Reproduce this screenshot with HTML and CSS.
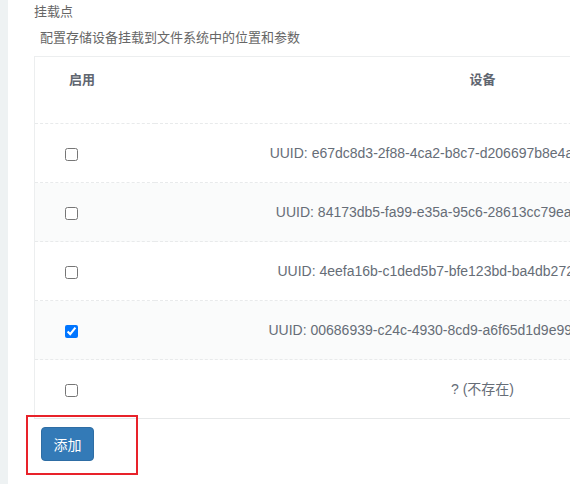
FILE: index.html
```html
<!DOCTYPE html>
<html lang="zh-CN">
<head>
<meta charset="utf-8">
<title>挂载点</title>
<link rel="stylesheet" href="styles.css">
</head>
<body>
<div class="sidebar"></div>
<main class="main">
  <h3 class="title">挂载点</h3>
  <p class="desc">配置存储设备挂载到文件系统中的位置和参数</p>
  <div class="table-wrap">
    <table class="mounts">
      <colgroup>
        <col class="c-enable">
        <col class="c-device">
        <col class="c-rest">
      </colgroup>
      <thead>
        <tr>
          <th class="col-enable">启用</th>
          <th class="col-device">设备</th>
          <th class="col-rest"></th>
        </tr>
      </thead>
      <tbody>
        <tr>
          <td class="col-enable"><input type="checkbox"></td>
          <td class="col-device">UUID: e67dc8d3-2f88-4ca2-b8c7-d206697b8e4a (/dev/sda1, 64 MB)</td>
          <td class="col-rest"></td>
        </tr>
        <tr class="alt">
          <td class="col-enable"><input type="checkbox"></td>
          <td class="col-device">UUID: 84173db5-fa99-e35a-95c6-28613cc79ea9 (/dev/sda2, 1GB)</td>
          <td class="col-rest"></td>
        </tr>
        <tr>
          <td class="col-enable"><input type="checkbox"></td>
          <td class="col-device">UUID: 4eefa16b-c1ded5b7-bfe123bd-ba4db272 (/dev/sdb1, 8 GB)</td>
          <td class="col-rest"></td>
        </tr>
        <tr class="alt">
          <td class="col-enable"><input type="checkbox" checked></td>
          <td class="col-device">UUID: 00686939-c24c-4930-8cd9-a6f65d1d9e99 (/dev/sdb2, 32 GiB)</td>
          <td class="col-rest"></td>
        </tr>
        <tr>
          <td class="col-enable"><input type="checkbox"></td>
          <td class="col-device">? (不存在)</td>
          <td class="col-rest"></td>
        </tr>
      </tbody>
    </table>
  </div>
  <div class="actions">
    <button class="btn-add" type="button">添加</button>
  </div>
</main>
</body>
</html>
```

FILE: styles.css
```css
html, body {
  margin: 0;
  padding: 0;
  height: 100%;
}

body {
  display: flex;
  background: #fff;
  overflow: hidden;
  font-family: "Liberation Sans", "Noto Sans CJK SC", sans-serif;
  font-size: 13px;
  color: #5f6670;
}

.sidebar {
  flex: 0 0 8px;
  background: #eef2f3;
}

.main {
  flex: 1 1 auto;
  min-width: 0;
  padding-left: 26px;
  display: flex;
  flex-direction: column;
}

.title {
  margin: 0;
  padding-top: 1px;
  font-size: 13px;
  font-weight: normal;
  line-height: 20px;
  color: #666;
  font-family: "Noto Sans CJK SC", sans-serif;
}

.desc {
  margin: 7px 0 0 6px;
  font-size: 13px;
  line-height: 18px;
  color: #666;
  font-family: "Noto Sans CJK SC", sans-serif;
}

.table-wrap {
  margin-top: 10px;
  width: 900px;
}

.mounts {
  table-layout: fixed;
  border-collapse: collapse;
  border-left: 1px solid #eceeef;
  border-top: 1px solid #eceeef;
  border-bottom: 1px solid #e6e8e9;
  width: 900px;
}

.c-enable {
  width: 120px;
}

.c-device {
  width: 656px;
}

.mounts th {
  height: 67px;
  padding: 13px 0 0;
  vertical-align: top;
  font-weight: bold;
  font-size: 13px;
  line-height: 17px;
  color: #5f6670;
  font-family: "Noto Sans CJK SC", sans-serif;
  box-sizing: border-box;
}

.mounts td {
  height: 58px;
  padding: 0;
  vertical-align: middle;
  line-height: 17px;
}

.mounts tr {
  border-bottom: 1px dashed #e8eaeb;
}

.mounts tbody tr:last-child {
  border-bottom: 1px solid #e6e8e9;
}

.mounts tr.alt {
  background: #fafbfb;
}

.col-enable {
  text-align: left;
}

th.col-enable {
  padding-left: 34px;
}

td.col-enable {
  padding-left: 26px;
}

.col-enable input {
  margin: 0 0 0 4px;
  width: 13px;
  height: 13px;
  vertical-align: middle;
}

td.col-device {
  text-align: center;
  white-space: nowrap;
  overflow: visible;
  font-size: 14px;
  color: #666d77;
}

th.col-device {
  text-align: center;
}

.actions {
  margin: -4px 0 0 -8px;
  align-self: flex-start;
  border: 2px solid #e8222a;
  width: 112px;
  height: 60px;
  padding: 10px 0 0 13px;
  box-sizing: border-box;
}

.btn-add {
  width: 53px;
  height: 34px;
  border: 1px solid #2e6da4;
  border-radius: 4px;
  background: #337ab7;
  color: #fff;
  font-family: "Noto Sans CJK SC", sans-serif;
  font-size: 14px;
  padding: 0;
  cursor: pointer;
}
```
